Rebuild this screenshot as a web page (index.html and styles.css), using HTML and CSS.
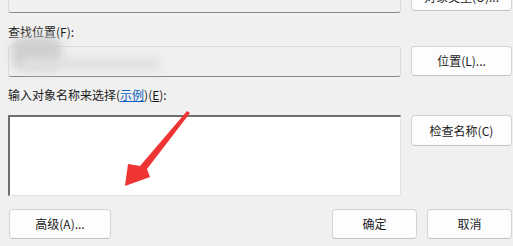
FILE: index.html
```html
<!DOCTYPE html>
<html lang="zh-CN">
<head>
<meta charset="utf-8">
<link rel="stylesheet" href="styles.css">
</head>
<body>
<div class="dialog">
  <div class="row row-top">
    <div class="field field-top"></div>
    <button class="btn btn-top">对象类型(O)...</button>
  </div>
  <div class="label label-1">查找位置(F):</div>
  <div class="row row-loc">
    <div class="field field-loc"></div>
    <button class="btn btn-loc">位置(L)...</button>
  </div>
  <div class="label label-2">输入对象名称来选择(<span class="link">示例</span>)(<u>E</u>):</div>
  <div class="row row-names">
    <div class="textarea"></div>
    <button class="btn btn-check">检查名称(C)</button>
  </div>
  <div class="row row-bottom">
    <button class="btn btn-adv">高级(A)...</button>
    <div class="spacer"></div>
    <button class="btn btn-ok">确定</button>
    <button class="btn btn-cancel">取消</button>
  </div>
</div>
<div class="blur blur-a"></div>
<div class="blur blur-b"></div>
<svg class="arrow" width="513" height="246" viewBox="0 0 513 246">
  <polygon points="187,111 190,113 147,169 150,177 125,186 128,164 140,166" fill="#ef3434"/>
</svg>
</body>
</html>
```
FILE: styles.css
```css
html, body {
  margin: 0;
  padding: 0;
  background: #f0f0f0;
  overflow: hidden;
}
body {
  width: 513px;
  height: 246px;
  position: relative;
  font-family: "Noto Sans CJK SC", "Noto Sans", sans-serif;
  font-size: 12px;
  color: #1b1b1b;
}
.dialog {
  display: flex;
  flex-direction: column;
  padding: 0 1px 0 8px;
  margin-top: -20px;
}
.row {
  display: flex;
  align-items: flex-start;
  gap: 10px;
}
.field {
  width: 393px;
  box-sizing: border-box;
  border: 1px solid #dadada;
  border-bottom: 1px solid #8a8a8a;
  border-radius: 3px;
  background: #f0f0f0;
}
.field-top { height: 33px; }
.field-loc { height: 31px; }
.btn {
  box-sizing: border-box;
  width: 101px;
  border: 1px solid #d3d3d3;
  border-bottom-color: #c2c2c2;
  border-radius: 4px;
  background: #fdfdfd;
  font-family: inherit;
  font-size: 12px;
  color: #1b1b1b;
  padding: 0;
  line-height: 16px;
}
.btn-top { height: 29px; margin-top: 2px; }
.btn-loc { height: 30px; }
.btn-check { height: 31px; }
.label {
  line-height: 16px;
  height: 16px;
}
.label-1 { margin-top: 11px; }
.row-loc { margin-top: 6px; }
.label-2 { margin-top: 10px; }
.row-names { margin-top: 12px; }
.link {
  color: #0a5fc0;
  text-decoration: underline;
}
.textarea {
  width: 393px;
  height: 81px;
  box-sizing: border-box;
  background: #ffffff;
  border: 1px solid #e3e3e3;
  border-top: 2px solid #6e6e6e;
  border-left: 2px solid #6e6e6e;
}
.row-bottom {
  margin-top: 13px;
  gap: 0;
}
.row-bottom .btn { height: 30px; }
.btn-adv { width: 102px; margin-left: 1px; }
.spacer { flex: 1; }
.btn-ok { width: 85px; }
.btn-cancel { width: 85px; margin-left: 10px; }
.blur {
  position: absolute;
  border-radius: 10px;
  filter: blur(4px);
}
.blur-a {
  left: 12px;
  top: 37px;
  width: 50px;
  height: 32px;
  background: #cfcfcf;
}
.blur-b {
  left: 20px;
  top: 58px;
  width: 140px;
  height: 12px;
  background: #e0e0e0;
}
.arrow {
  position: absolute;
  left: 0;
  top: 0;
  pointer-events: none;
}
```
